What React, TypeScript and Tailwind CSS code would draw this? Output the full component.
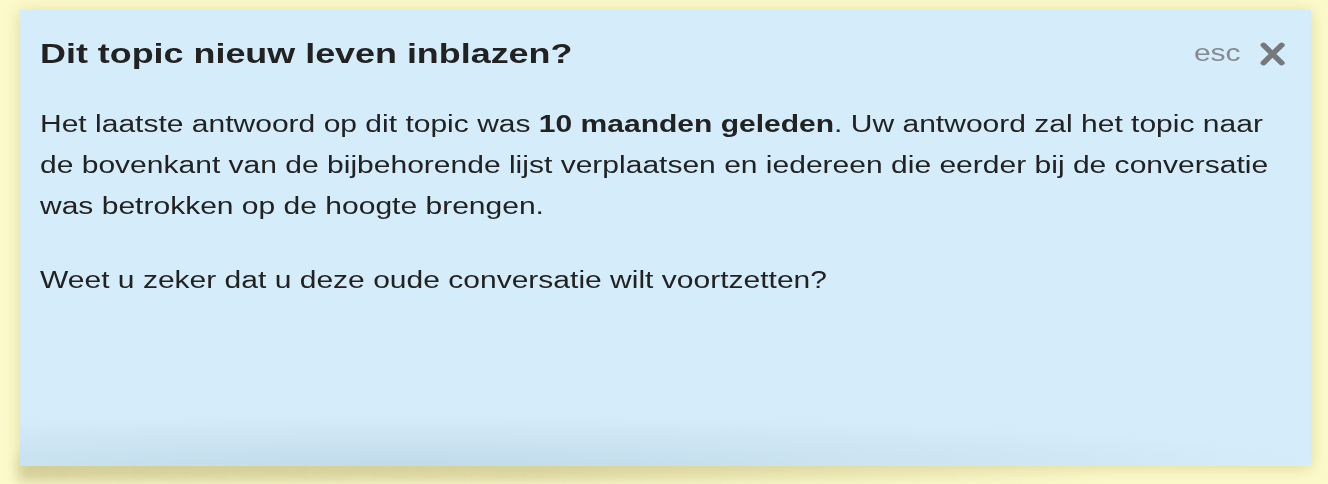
import React from "react";

export default function App() {
  return (
    <div
      className="w-[1328px] h-[484px] bg-[#fcf9cb] overflow-hidden pt-[10px] pl-[20px]"
      style={{ fontFamily: '"Liberation Sans", Arial, Helvetica, sans-serif' }}
    >
      <div className="relative w-[1291px] h-[456px] bg-[#d5ecfa] shadow-[0_2px_14px_rgba(170,160,60,0.35)] pl-[20px] pt-[28px] text-[#222222]">
        <div className="pointer-events-none absolute left-[-2px] top-[calc(100%-8px)] w-[1150px] h-[24px] blur-[6px] bg-[linear-gradient(to_right,rgba(200,195,140,0.7),rgba(200,195,140,0.6)_45%,rgba(230,225,160,0)_95%)]" />
        <div className="pointer-events-none absolute inset-0 bg-[#d5ecfa]" />
        <div className="pointer-events-none absolute inset-x-0 bottom-0 h-[50px] bg-[radial-gradient(ellipse_70%_100%_at_30%_100%,rgba(165,195,212,0.42),rgba(165,195,212,0))]" />
        <div className="relative w-[954px] origin-top-left scale-x-[1.305]">
          <div className="flex items-start justify-between">
            <h1 className="m-0 text-[27.5px] font-bold leading-[32px]">Dit topic nieuw leven inblazen?</h1>
            <div className="flex items-center gap-[15px] mt-[1px]">
              <span className="text-[23px] leading-[28px] text-[#858a8e]">esc</span>
              <svg width="19" height="24" viewBox="0 0 19 24" className="mt-[1px]">
                <path d="M2.5 3 L16.5 21 M16.5 3 L2.5 21" stroke="#75797c" strokeWidth="4.6" strokeLinecap="round" />
              </svg>
            </div>
          </div>
          <p className="mt-[34px] text-[23px] leading-[41px]">
            Het laatste antwoord op dit topic was <b>10 maanden geleden</b>. Uw antwoord zal het topic naar de bovenkant van de bijbehorende lijst verplaatsen en iedereen die eerder bij de conversatie was betrokken op de hoogte brengen.
          </p>
          <p className="mt-[33px] text-[23px] leading-[41px]">Weet u zeker dat u deze oude conversatie wilt voortzetten?</p>
        </div>
      </div>
    </div>
  );
}
